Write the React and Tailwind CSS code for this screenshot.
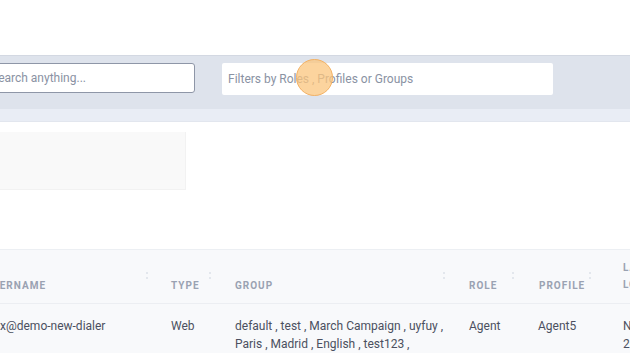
import React from "react";

const Dots = () => (
  <div className="shrink-0 flex flex-col gap-[3px] pt-[22px]">
    <span className="block w-[2px] h-[2px] rounded-full bg-[#dde1e8]" />
    <span className="block w-[2px] h-[2px] rounded-full bg-[#dde1e8]" />
  </div>
);

const App = () => {
  return (
    <div
      className="relative w-[630px] h-[354px] overflow-hidden bg-white"
      style={{ fontFamily: "Roboto, 'Liberation Sans', sans-serif" }}
    >
      <div className="h-[55px]" />

      {/* filter band */}
      <div className="bg-[#dee3ec] h-[54px] flex items-start pt-[7px] border-t border-[#d3d8e2]">
        <div className="shrink-0 ml-[-18px] w-[213px] h-[30px] bg-white border border-[#8e96a7] rounded-[3px] flex items-center pl-[8px] text-[12px] text-[#8a92a3]">
          Search anything...
        </div>
        <div className="shrink-0 ml-[27px] w-[331px] h-[32px] bg-white rounded-[2px] flex items-center pl-[6px] text-[12px] text-[#8a92a3]">
          Filters by Roles , Profiles or Groups
        </div>
      </div>
      <div className="bg-[#e9edf5] h-[13px] border-b border-[#e2e6ee]" />

      {/* placeholder card */}
      <div className="mt-[10px] w-[186px] h-[58px] bg-[#f9f9f9] border-b border-r border-[#f2f2f2]" />

      <div className="h-[59px]" />

      {/* table */}
      <div className="border-t border-[#eceff3]">
        <div className="flex h-[54px] bg-[#f8f9fb] border-b border-[#eceef2] text-[10px] font-bold tracking-[1px] text-[#9aa2b2] whitespace-nowrap">
          <div className="shrink-0 w-[161px] ml-[-15px] flex items-end pb-[10px]">USERNAME</div>
          <Dots />
          <div className="shrink-0 w-[61px] flex items-end pb-[10px] pl-[23px]">TYPE</div>
          <Dots />
          <div className="shrink-0 w-[232px] flex items-end pb-[10px] pl-[24px]">GROUP</div>
          <Dots />
          <div className="shrink-0 w-[67px] flex items-end pb-[10px] pl-[24px]">ROLE</div>
          <Dots />
          <div className="shrink-0 w-[75px] flex items-end pb-[10px] pl-[25px]">PROFILE</div>
          <Dots />
          <div className="shrink-0 flex flex-col justify-end pb-[10px] pl-[32px] leading-[17px]">
            <span>LAST</span>
            <span>LOGIN</span>
          </div>
        </div>

        <div className="flex bg-[#f8f9fb] pt-[13px] text-[12px] leading-[18px] text-[#4b5060] whitespace-nowrap">
          <div className="shrink-0 w-[149px]">x@demo-new-dialer</div>
          <div className="shrink-0 w-[64px] pl-[22px]">Web</div>
          <div className="shrink-0 w-[234px] pl-[22px] flex flex-col">
            <span>default , test , March Campaign , uyfuy ,</span>
            <span>Paris , Madrid , English , test123 ,</span>
          </div>
          <div className="shrink-0 w-[69px] pl-[22px]">Agent</div>
          <div className="shrink-0 w-[85px] pl-[22px]">Agent5</div>
          <div className="shrink-0 flex flex-col pl-[22px]">
            <span>Never</span>
            <span>2024</span>
          </div>
        </div>
      </div>

      {/* click highlight */}
      <div className="absolute left-[296px] top-[59px] w-[37px] h-[37px] rounded-full bg-[#fbc57e]/75 border border-[#f3b164]" />
    </div>
  );
};

export default App;
